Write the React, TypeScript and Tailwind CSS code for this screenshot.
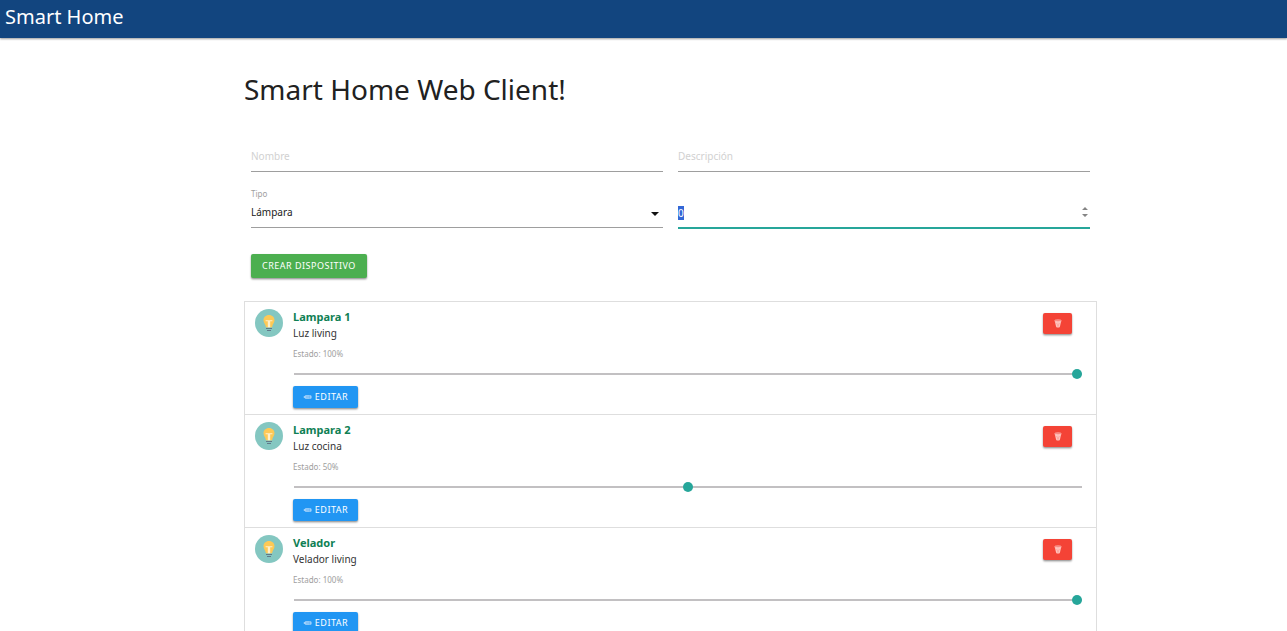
import { useEffect, useRef, useState } from "react";

type Device = { id: number; name: string; description: string; state: number };

const initialDevices: Device[] = [
  { id: 1, name: "Lampara 1", description: "Luz living", state: 100 },
  { id: 2, name: "Lampara 2", description: "Luz cocina", state: 50 },
  { id: 3, name: "Velador", description: "Velador living", state: 100 },
];

const raised = "rounded-[2px] shadow-[0_1px_2px_rgba(0,0,0,0.35),0_2px_2px_rgba(0,0,0,0.12)]";

function BulbIcon() {
  return (
    <svg viewBox="0 0 28 28" className="size-7 shrink-0" aria-hidden="true">
      <circle cx="14" cy="14" r="14" fill="#84c7c1" />
      <path d="M14 6c-3.3 0-5.500 2.400-5.500 5.300 0 2.700 2 3.700 2.400 6.900h6.200c.4-3.200 2.400-4.200 2.400-6.900C19.500 8.400 17.300 6 14 6z" fill="#fdc956" />
      <path d="M10.600 11.200h6.800v1.100h-2.200V18.200h-2.400v-5.900h-2.200z" fill="#fff0cc" />
      <path d="M11 19h6v1.100h-6zM12 20.900h4v1h-4z" fill="#607889" />
    </svg>
  );
}

function TrashIcon() {
  return (
    <svg viewBox="0 0 8 9" className="h-[9px] w-2" aria-hidden="true">
      <path d="M.8 2.200 2.200 7.900c.6.7 3 .7 3.600 0l1.400-5.700z" fill="#ffc4be" />
      <ellipse cx="4" cy="1.800" rx="3.300" ry=".9" fill="#f5655a" stroke="#ffdedb" strokeWidth=".7" />
      <path d="m2 4 3 3.500M6 4 3 7.500M4 3.500v4.500" stroke="#f98e86" strokeWidth=".4" />
    </svg>
  );
}

function PencilIcon() {
  return (
    <svg viewBox="0 0 9 6" className="h-[6px] w-[9px]" aria-hidden="true">
      <path d="M.3 3 2.600 1.200h5c1.300 0 1.300 3.600 0 3.600h-5z" fill="#b5dafb" />
      <path d="M2.600 2.400h4.300M2.600 3.600h4.300M6.900 1.200v3.600" stroke="#4ba6f5" strokeWidth=".5" />
    </svg>
  );
}

function DeviceRow({ device, onState, onDelete }: { device: Device; onState: (n: number) => void; onDelete: () => void }) {
  return (
    <li className="flex gap-[10px] border-b border-[#dedede] pt-[7px] pr-[14px] pb-[6px] pl-[10px] last:border-b-0">
      <BulbIcon />
      <div className="flex min-w-0 flex-1 flex-col items-start">
        <div className="flex w-full items-start justify-between pr-[10px]">
          <div>
            <h2 className="text-[11px] leading-4 font-bold text-[#0f8054]">{device.name}</h2>
            <p className="text-[10px] leading-4 text-[#333]">{device.description}</p>
          </div>
          <button type="button" aria-label={`Eliminar ${device.name}`} onClick={onDelete} className={`mt-1 flex h-[21px] w-[29px] items-center justify-center bg-[#f44336] ${raised}`}>
            <TrashIcon />
          </button>
        </div>
        <label htmlFor={`state-${device.id}`} className="mt-[5px] text-[8px] leading-4 text-[#9e9e9e]">
          Estado: {device.state}%
        </label>
        <input
          id={`state-${device.id}`}
          type="range"
          min={0}
          max={100}
          value={device.state}
          onChange={(e) => onState(Number(e.target.value))}
          className="mt-[7px] ml-px h-[10px] w-[calc(100%-1px)] cursor-pointer appearance-none bg-transparent outline-none [&::-webkit-slider-runnable-track]:h-[2px] [&::-webkit-slider-runnable-track]:bg-[#c2c0c2] [&::-webkit-slider-thumb]:-mt-1 [&::-webkit-slider-thumb]:size-[10px] [&::-webkit-slider-thumb]:appearance-none [&::-webkit-slider-thumb]:rounded-full [&::-webkit-slider-thumb]:bg-[#26a69a]"
        />
        <button type="button" className={`mt-[7px] flex h-[22px] w-[65px] items-center justify-center gap-[3px] bg-[#2196f3] text-[9px] tracking-[0.5px] text-white ${raised}`}>
          <PencilIcon />
          EDITAR
        </button>
      </div>
    </li>
  );
}

export default function App() {
  const [devices, setDevices] = useState(initialDevices);
  const stateInput = useRef<HTMLInputElement>(null);

  useEffect(() => {
    stateInput.current?.focus();
    stateInput.current?.select();
  }, []);

  const field = "block w-full appearance-none rounded-none border-b border-[#9e9e9e] bg-transparent text-[10px] leading-4 text-[#212121] outline-none";

  return (
    <div className="h-screen overflow-x-hidden overflow-y-auto bg-white font-['Noto_Sans',sans-serif] [scrollbar-width:none]">
      <header className="h-[38px] bg-[#12457f] px-[5px] shadow-[0_1px_2px_rgba(0,0,0,0.4)]">
        <a href="#" className="text-[20px] leading-[34px] text-white">Smart Home</a>
      </header>
      <main className="pr-[190px] pl-[244px]">
        <h1 className="pt-[31px] text-[28px] leading-[40px] text-[#212121]">Smart Home Web Client!</h1>
        <form onSubmit={(e) => e.preventDefault()} className="pt-[32px] pr-[7px] pl-[7px]">
          <div className="grid grid-cols-2 gap-x-[15px]">
            <input aria-label="Nombre" placeholder="Nombre" className={`${field} h-[31px] pb-px placeholder:text-[#d1d1d1]`} />
            <input aria-label="Descripción" placeholder="Descripción" className={`${field} h-[31px] pb-px placeholder:text-[#d1d1d1]`} />
            <div className="relative pt-[14px]">
              <label htmlFor="type" className="block text-[8px] leading-4 text-[#9e9e9e]">Tipo</label>
              <select id="type" className={`${field} h-[26px] pb-[5px]`}>
                <option>Lámpara</option>
                <option>Persiana</option>
              </select>
              <svg viewBox="0 0 8 4" className="pointer-events-none absolute right-1 bottom-[13px] h-1 w-2" aria-hidden="true">
                <path d="M0 0h8L4 4z" fill="#111" />
              </svg>
            </div>
            <div className="relative pt-[31px]">
              <input
                ref={stateInput}
                type="number"
                aria-label="Estado"
                defaultValue={0}
                className={`${field} h-[26px] border-b-2 border-[#26a69a] pb-[5px] [-moz-appearance:textfield] selection:bg-[#3367d6] selection:text-white [&::-webkit-inner-spin-button]:appearance-none`}
              />
              <svg viewBox="0 0 6 10" className="pointer-events-none absolute right-[2px] bottom-3 h-[10px] w-[6px]" aria-hidden="true">
                <path d="M3 0 6 3H0zM0 7h6l-3 3z" fill="#858585" />
              </svg>
            </div>
          </div>
          <button type="submit" className={`mt-[25px] flex h-6 items-center bg-[#4caf50] px-[11px] text-[9px] tracking-[0.5px] text-white ${raised}`}>
            CREAR DISPOSITIVO
          </button>
        </form>
        <ul className="mt-[23px] border border-[#dedede]">
          {devices.map((device) => (
            <DeviceRow
              key={device.id}
              device={device}
              onState={(state) => setDevices((all) => all.map((d) => (d.id === device.id ? { ...d, state } : d)))}
              onDelete={() => setDevices((all) => all.filter((d) => d.id !== device.id))}
            />
          ))}
        </ul>
      </main>
    </div>
  );
}
